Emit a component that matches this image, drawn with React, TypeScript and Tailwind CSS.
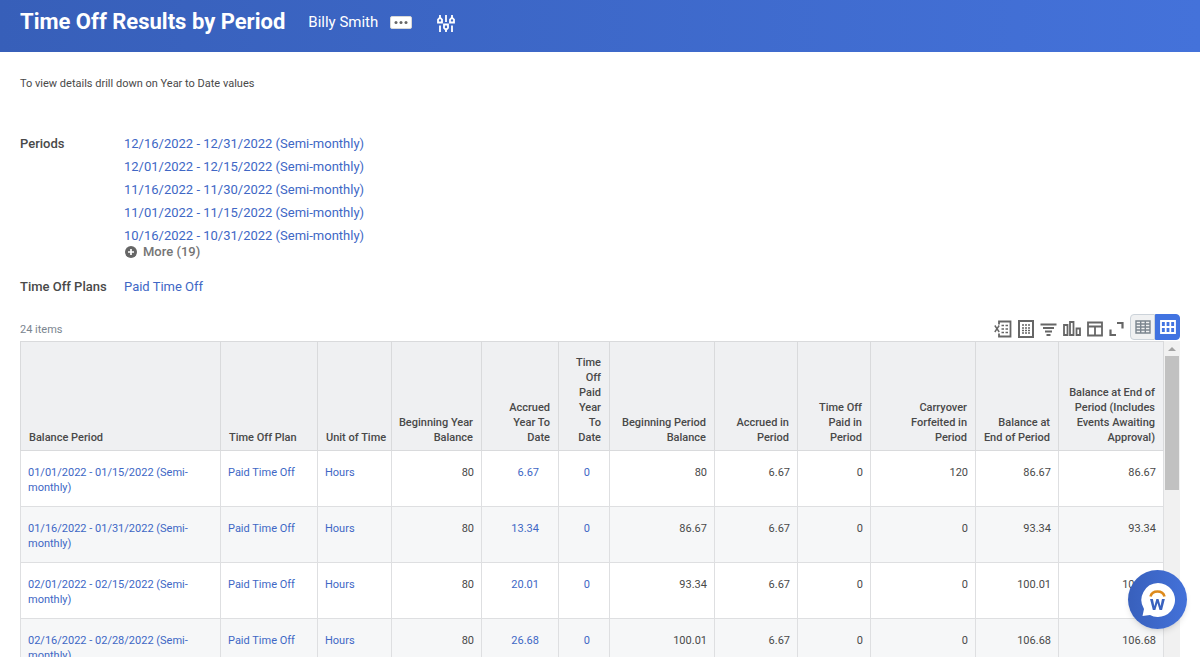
import { useState } from "react";

const periods = [
  "12/16/2022 - 12/31/2022 (Semi-monthly)",
  "12/01/2022 - 12/15/2022 (Semi-monthly)",
  "11/16/2022 - 11/30/2022 (Semi-monthly)",
  "11/01/2022 - 11/15/2022 (Semi-monthly)",
  "10/16/2022 - 10/31/2022 (Semi-monthly)",
];

const columns = [
  { label: "Balance Period", width: "w-[200px]", link: true, numeric: false },
  { label: "Time Off Plan", width: "w-[97px]", link: true, numeric: false },
  { label: "Unit of Time", width: "w-[74px]", link: true, numeric: false },
  { label: "Beginning Year Balance", width: "w-[90px]", link: false, numeric: true },
  { label: "Accrued Year To Date", width: "w-[77px]", link: true, numeric: true },
  { label: "Time Off Paid Year To Date", width: "w-[51px]", link: true, numeric: true },
  { label: "Beginning Period Balance", width: "w-[105px]", link: false, numeric: true },
  { label: "Accrued in Period", width: "w-[83px]", link: false, numeric: true },
  { label: "Time Off Paid in Period", width: "w-[73px]", link: false, numeric: true },
  { label: "Carryover Forfeited in Period", width: "w-[105px]", link: false, numeric: true },
  { label: "Balance at End of Period", width: "w-[83px]", link: false, numeric: true },
  { label: "Balance at End of Period (Includes Events Awaiting Approval)", width: "w-[105px]", link: false, numeric: true },
];

const rows = [
  ["01/01/2022 - 01/15/2022 (Semi-monthly)", "Paid Time Off", "Hours", "80", "6.67", "0", "80", "6.67", "0", "120", "86.67", "86.67"],
  ["01/16/2022 - 01/31/2022 (Semi-monthly)", "Paid Time Off", "Hours", "80", "13.34", "0", "86.67", "6.67", "0", "0", "93.34", "93.34"],
  ["02/01/2022 - 02/15/2022 (Semi-monthly)", "Paid Time Off", "Hours", "80", "20.01", "0", "93.34", "6.67", "0", "0", "100.01", "100.01"],
  ["02/16/2022 - 02/28/2022 (Semi-monthly)", "Paid Time Off", "Hours", "80", "26.68", "0", "100.01", "6.67", "0", "0", "106.68", "106.68"],
];

function Header() {
  return (
    <header className="flex h-[52px] shrink-0 items-start bg-linear-to-r from-[#375fb9] to-[#4472da] px-5 text-white">
      <h1 className="pt-1 text-[22px] leading-9 font-bold">Time Off Results by Period</h1>
      <span className="ml-[23px] pt-1 text-[15px] leading-9">Billy Smith</span>
      <button aria-label="Related actions" className="mt-4 ml-3 text-[#666]">
        <svg width="22" height="13" viewBox="0 0 22 13">
          <rect x="0.5" y="0.5" width="21" height="12" rx="1.5" fill="#fff" stroke="#d7d7d7" />
          <circle cx="6" cy="6.5" r="1.5" fill="currentColor" />
          <circle cx="11" cy="6.5" r="1.5" fill="currentColor" />
          <circle cx="16" cy="6.5" r="1.5" fill="currentColor" />
        </svg>
      </button>
      <button aria-label="Configure" className="mt-3.5 ml-6">
        <svg width="20" height="20" viewBox="0 0 20 20" fill="none" stroke="currentColor" strokeWidth="1.8">
          <path d="M4 1v3M4 11.5V18M10 1v7M10 15.500V18M16 1v3M16 11.500V18" />
          <path d="M2 8.500V5.500L4 3.500l2 2v3zM14 8.500V5.500l2-2l2 2v3zM8 10.500h4v3.500l-2 2l-2-2z" />
        </svg>
      </button>
    </header>
  );
}

function ExcelIcon() {
  return (
    <svg width="18" height="18" viewBox="0 0 18 18" fill="none" stroke="currentColor">
      <path d="M5 4.5V1.5h11.5v15H5v-3" strokeWidth="1.8" />
      <path d="M0.800 5.500l4.400 6.500M5.200 5.500l-4.400 6.500" strokeWidth="1.4" />
      <path d="M7.500 5.500h2.500M11.500 5.500h2.500M7.500 9h2.500M11.500 9h2.500M7.500 12.500h2.500M11.500 12.500h2.500" strokeWidth="1.7" />
    </svg>
  );
}

function SheetIcon() {
  return (
    <svg width="16" height="18" viewBox="0 0 16 18" fill="none" stroke="currentColor">
      <rect x="1" y="1" width="14" height="16" strokeWidth="2" />
      <path d="M4 5h2M7 5h2M10 5h2M4 8h2M7 8h2M10 8h2M4 10.500h2M7 10.500h2M10 10.500h2M4 13h2M7 13h2M10 13h2" strokeWidth="1.700" />
    </svg>
  );
}

function FilterIcon() {
  return (
    <svg width="17" height="18" viewBox="0 0 17 18" fill="none" stroke="currentColor" strokeWidth="1.9">
      <path d="M0.500 4.500h16M3 8h11M5 11.500h7M6.500 15h4" />
    </svg>
  );
}

function ChartIcon() {
  return (
    <svg width="18" height="18" viewBox="0 0 18 18" fill="none" stroke="currentColor" strokeWidth="1.8">
      <path d="M1 5h3.500v10H1zM7 2h3.500v13H7zM13.500 8.500H17V15h-3.500z" />
    </svg>
  );
}

function LayoutIcon() {
  return (
    <svg width="16" height="18" viewBox="0 0 16 18" fill="none" stroke="currentColor" strokeWidth="1.8">
      <path d="M1 2.500h14v13H1zM1 6.500h14M8 6.500v9" />
    </svg>
  );
}

function ExpandIcon() {
  return (
    <svg width="15" height="18" viewBox="0 0 15 18" fill="none" stroke="currentColor" strokeWidth="2.2">
      <path d="M8 3h5.500v5.500M1.500 9.500V15H7" />
    </svg>
  );
}

const tools = [
  { label: "Export to Excel", icon: ExcelIcon },
  { label: "Export to worksheet", icon: SheetIcon },
  { label: "Filter", icon: FilterIcon },
  { label: "Chart", icon: ChartIcon },
  { label: "Table preferences", icon: LayoutIcon },
  { label: "Expand", icon: ExpandIcon },
];

function Toolbar({ view, onView }: { view: string; onView: (v: string) => void }) {
  const active = "border-[#4173e1] bg-[#4173e1] text-white";
  const idle = "border-[#ccd3da] bg-[#f0f1f2] text-[#7b858f]";

  return (
    <div className="flex items-center">
      <div className="mr-1.5 flex items-center gap-1.5 pt-1 text-[#666]">
        {tools.map(({ label, icon: Icon }) => (
          <button key={label} aria-label={label}>
            <Icon />
          </button>
        ))}
      </div>
      <div className="flex h-[26px]">
        <button
          aria-label="List view"
          onClick={() => onView("list")}
          className={`flex w-[25px] items-center justify-center rounded-l border ${view === "list" ? active : idle}`}
        >
          <svg width="16" height="14" viewBox="0 0 16 14" fill="none" stroke="currentColor" strokeWidth="1.4" className="shrink-0">
            <path d="M1 1h14v12H1zM1 4h14M1 7h14M1 10h14M5.700 1v12M10.300 1v12" />
          </svg>
        </button>
        <button
          aria-label="Grid view"
          onClick={() => onView("grid")}
          className={`flex w-[25px] items-center justify-center rounded-r border ${view === "grid" ? active : idle}`}
        >
          <svg width="16" height="14" viewBox="0 0 16 14" fill="none" stroke="currentColor" strokeWidth="1.8" className="shrink-0">
            <path d="M1 1h14v12H1zM1 7h14M5.700 1v12M10.300 1v12" />
          </svg>
        </button>
      </div>
    </div>
  );
}

function ResultsTable() {
  return (
    <table className="w-full table-fixed border-collapse text-[11px] leading-[15px] text-[#494949]">
      <thead>
        <tr className="h-[109px] bg-[#eff0f2]">
          {columns.map((c) => (
            <th
              key={c.label}
              scope="col"
              className={`border border-[#d9dadc] pb-[5px] align-bottom font-medium ${c.width} ${c.numeric ? "pr-2 pl-1.5 text-right" : "pr-1 pl-2 text-left"}`}
            >
              {c.label}
            </th>
          ))}
        </tr>
      </thead>
      <tbody>
        {rows.map((row) => (
          <tr key={row[0]} className="h-14 even:bg-[#f6f7f8]">
            {row.map((cell, i) => (
              <td
                key={columns[i].label}
                className={`border border-[#dedfe1] px-[7px] pt-3.5 align-top ${columns[i].numeric ? "text-right" : "text-left"}`}
              >
                {columns[i].link ? (
                  <a href="#" className={`text-[#4067c5] ${columns[i].numeric ? "pr-3" : ""}`}>
                    {cell}
                  </a>
                ) : (
                  cell
                )}
              </td>
            ))}
          </tr>
        ))}
      </tbody>
    </table>
  );
}

export default function App() {
  const [view, setView] = useState("grid");

  return (
    <div className="flex h-screen flex-col overflow-hidden bg-white font-[Roboto,sans-serif] text-[#494949]">
      <Header />
      <main className="flex min-h-0 flex-1 flex-col px-5">
        <p className="pt-6 text-[11px] leading-4">To view details drill down on Year to Date values</p>

        <dl className="mt-10 grid grid-cols-[104px_1fr] text-[13px]">
          <dt className="leading-[23px] font-medium">Periods</dt>
          <dd>
            <ul className="leading-[23px]">
              {periods.map((p) => (
                <li key={p}>
                  <a href="#" className="text-[#4067c5]">{p}</a>
                </li>
              ))}
            </ul>
            <button className="-mt-0.5 flex items-center gap-[5px] leading-[14px] font-medium text-[#757575]">
              <svg width="14" height="14" viewBox="0 0 14 14">
                <circle cx="7" cy="7" r="6" fill="#666" />
                <path d="M7 4v6M4 7h6" stroke="#fff" strokeWidth="1.7" />
              </svg>
              More (19)
            </button>
          </dd>
          <dt className="pt-4 leading-[23px] font-medium">Time Off Plans</dt>
          <dd className="pt-4 leading-[23px]">
            <a href="#" className="text-[#4067c5]">Paid Time Off</a>
          </dd>
        </dl>

        <div className="mt-4 flex items-end justify-between">
          <span className="pb-0.5 text-[11px] leading-4 text-[#7b858f]">24 items</span>
          <Toolbar view={view} onView={setView} />
        </div>

        <div className="mt-px flex min-h-0 flex-1 overflow-hidden">
          <div className="min-w-0 flex-1">
            <ResultsTable />
          </div>
          <div className="flex w-4 shrink-0 flex-col items-center bg-[#f1f1f1]">
            <svg width="16" height="15" viewBox="0 0 16 15">
              <path d="M4 10l4-4l4 4z" fill="#a3a3a3" />
            </svg>
            <div className="h-[134px] w-3.5 bg-[#c1c1c1]" />
          </div>
        </div>
      </main>

      <button
        aria-label="Open assistant"
        className="fixed right-[13px] bottom-7 flex size-[59px] items-center justify-center rounded-full bg-linear-to-r from-[#3860bc] to-[#4371d9] shadow-md"
      >
        <svg width="36" height="36" viewBox="0 0 36 36">
          <path d="M18 1a17 17 0 1 1-8 32l-7.500 1l1.500-7A17 17 0 0 1 18 1z" fill="#fff" />
          <path d="M10.500 14.500a7.200 6.500 0 0 1 14 0" fill="none" stroke="#dd8a1c" strokeWidth="2.6" />
          <text x="17.5" y="28" textAnchor="middle" fontSize="21" fontWeight="700" fill="#3a62be">w</text>
        </svg>
      </button>
    </div>
  );
}
